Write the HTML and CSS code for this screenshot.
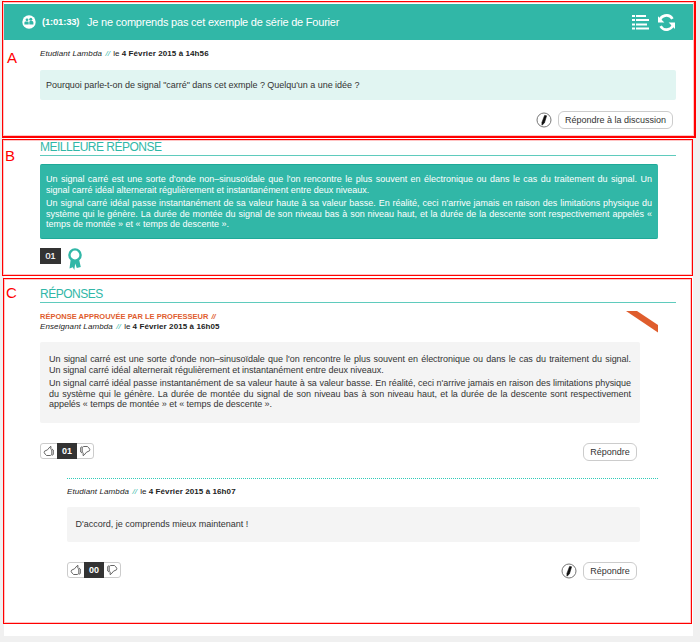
FILE: index.html
```html
<!DOCTYPE html>
<html lang="fr">
<head>
<meta charset="utf-8">
<title>Discussion</title>
<link rel="stylesheet" href="styles.css">
</head>
<body>
<svg class="defs" aria-hidden="true">
  <symbol id="pencil" viewBox="0 0 16 16"><circle cx="8" cy="8" r="7" fill="#fff" stroke="#777" stroke-width="1"/><path d="M8.600 3.400 10.600 3.800 8.400 11 5.900 13.200 6 10.200Z" fill="#111" stroke="#111" stroke-width=".6" stroke-linejoin="round"/></symbol>
  <symbol id="thumb" viewBox="0 0 12 12"><path d="M1.5 6.200 4.500 4.800 7 1.800 8 1.500 7.800 4.200 8.800 5v4.600L7.300 10.500H3.600L2.200 9.200 1.200 7.600Z M9 4l1.300 1v4.500l-1.300 .8" fill="none" stroke="#555" stroke-width=".9"/></symbol>
</svg>
<main class="panel">
  <section class="frame frame-a">
    <span class="tag">A</span>
    <header class="bar">
      <svg class="group" viewBox="0 0 14 14"><circle cx="7" cy="7" r="6.700" fill="#fff"/><g fill="#31b7a7"><circle cx="5" cy="4.800" r="1.400"/><circle cx="8.800" cy="4.300" r="1.500"/><path d="M2.400 9.600V7.700q0-1.100 1.100-1.100h2.200q1 0 1 1.100v1.900ZM7.300 9.600V7q0-1 1-1h1.400q1.700 0 1.700 1.400v2.200Z"/></g></svg>
      <b class="time">(1:01:33)</b>
      <h1 class="title">Je ne comprends pas cet exemple de série de Fourier</h1>
      <svg class="list" viewBox="0 0 17 15"><path d="M0 1h3M4 1h10M0 5h3M4 5h13M0 9.500h3M4 9.500h11M0 13.500h3M4 13.500h13" stroke="#fff" stroke-width="2"/></svg>
      <svg class="sync" viewBox="0 0 16 16"><path d="M1.500 7.500A6.500 6.500 0 0 1 13.600 4.600M14.500 8.500A6.500 6.500 0 0 1 2.400 11.400" fill="none" stroke="#fff" stroke-width="2.500"/><path d="M0 2V8H6ZM16 14V8H10Z" fill="#fff"/></svg>
    </header>
    <p class="meta meta-a"><i>Etudiant Lambda</i> <em>//</em> le <b>4 Février 2015 à 14h56</b></p>
    <div class="question">Pourquoi parle-t-on de signal "carré" dans cet exmple ? Quelqu'un a une idée ?</div>
    <div class="actions actions-a"><svg class="pencil"><use href="#pencil"/></svg><button class="pill wide">Répondre à la discussion</button></div>
  </section>
  <section class="frame frame-b">
    <span class="tag">B</span>
    <h2 class="heading">MEILLEURE RÉPONSE</h2>
    <div class="best">
      <p><span>Un signal carré est une sorte d'onde non–sinusoïdale que l'on rencontre le plus souvent en électronique ou dans le cas du traitement du signal. Un</span><span class="end">signal carré idéal alternerait régulièrement et instantanément entre deux niveaux.</span></p>
      <p><span>Un signal carré idéal passe instantanément de sa valeur haute à sa valeur basse. En réalité, ceci n'arrive jamais en raison des limitations physique du</span><span>système qui le génère. La durée de montée du signal de son niveau bas à son niveau haut, et la durée de la descente sont respectivement appelés «</span><span class="end">temps de montée » et « temps de descente ».</span></p>
    </div>
    <div class="award"><b class="score">01</b><svg class="medal" viewBox="0 0 14 22"><path d="M2.600 12 1.500 20.500 4.800 19.300 6.300 22 7.200 15.500 8.800 20 12.800 19 11.200 12Z" fill="#31b7a7"/><circle cx="7" cy="7" r="5.600" fill="#fff" stroke="#31b7a7" stroke-width="2.400"/></svg></div>
  </section>
  <section class="frame frame-c">
    <span class="tag">C</span>
    <h2 class="heading">RÉPONSES</h2>
    <svg class="ribbon" viewBox="0 0 32 22"><path d="M0 0H11L32 14V21.500Z" fill="#df5d2d"/></svg>
    <p class="approved">RÉPONSE APPROUVÉE PAR LE PROFESSEUR <i>//</i></p>
    <p class="meta meta-c"><i>Enseignant Lambda</i> <em>//</em> le <b>4 Février 2015 à 16h05</b></p>
    <div class="answer">
      <p><span>Un signal carré est une sorte d'onde non–sinusoïdale que l'on rencontre le plus souvent en électronique ou dans le cas du traitement du signal.</span><span class="end">Un signal carré idéal alternerait régulièrement et instantanément entre deux niveaux.</span></p>
      <p><span>Un signal carré idéal passe instantanément de sa valeur haute à sa valeur basse. En réalité, ceci n'arrive jamais en raison des limitations physique</span><span>du système qui le génère. La durée de montée du signal de son niveau bas à son niveau haut, et la durée de la descente sont respectivement</span><span class="end">appelés « temps de montée » et « temps de descente ».</span></p>
    </div>
    <div class="footer footer-1"><div class="vote"><svg class="thumb"><use href="#thumb"/></svg><b>01</b><svg class="thumb down"><use href="#thumb"/></svg></div><div class="actions"><button class="pill">Répondre</button></div></div>
    <article class="reply">
      <p class="meta meta-r"><i>Etudiant Lambda</i> <em>//</em> le <b>4 Février 2015 à 16h07</b></p>
      <div class="comment">D'accord, je comprends mieux maintenant !</div>
      <div class="footer footer-2"><div class="vote"><svg class="thumb"><use href="#thumb"/></svg><b>00</b><svg class="thumb down"><use href="#thumb"/></svg></div><div class="actions"><svg class="pencil"><use href="#pencil"/></svg><button class="pill">Répondre</button></div></div>
    </article>
  </section>
</main>
</body>
</html>
```
FILE: styles.css
```css
* { box-sizing: border-box; }
body { margin: 0; background: #f0f0f0; font: 9px/10.5px "Liberation Sans", Arial, sans-serif; color: #333; height: 642px; overflow: hidden; }
h1, h2, p { margin: 0; font-weight: normal; }
svg { display: block; flex: none; }
.defs { position: absolute; width: 0; height: 0; }
.panel { background: #fff; width: 689px; height: 636px; margin-left: 4px; padding-top: 1px; }
.frame { position: relative; border: 1px solid #f00; padding-left: 37px; box-shadow: inset 0 0 0 1px #ffc4c4; }
.frame-a { width: 694px; height: 137px; margin-left: -2px; border-bottom-width: 2px; border-right-width: 2px; }
.frame-b { width: 691px; height: 137px; margin: 1px 0 0 -2px; }
.frame-c { width: 689px; height: 346px; margin: 2px 0 0 -1px; padding-left: 36px; }
.tag { position: absolute; left: 4px; top: 48px; color: #f00; font-size: 15px; line-height: 16px; }
.frame-b .tag { left: 2px; top: 8px; }
.frame-c .tag { left: 2px; top: 6px; }
.bar { display: flex; align-items: center; background: #31b7a7; color: #fff; height: 36px; margin: 2px 1px 0 -36px; padding: 0 18px; }
.group { width: 14px; height: 14px; }
.time { font-size: 9.5px; width: 45px; margin-left: 6px; white-space: nowrap; letter-spacing: -.2px; }
.title { font-size: 11px; flex: 1; white-space: nowrap; letter-spacing: -.21px; }
.list { width: 17px; height: 15px; }
.sync { width: 17px; height: 17px; margin-left: 9px; }
.meta { font-size: 8px; line-height: 10px; color: #222; white-space: nowrap; }
.meta i { letter-spacing: .1px; }
.meta em { color: #31b7a7; margin: 0 1.2px; }
.meta b { letter-spacing: .09px; }
.meta-a { margin-top: 9px; }
.question { margin-top: 11px; width: 636px; height: 30px; background: #e1f5f2; border-radius: 2px; padding-left: 6px; line-height: 30px; letter-spacing: -.03px; }
.actions { display: flex; align-items: center; gap: 6px; }
.actions-a { justify-content: flex-end; width: 633px; margin-top: 11px; }
.pencil { width: 16px; height: 16px; }
.pill { width: 54px; height: 18px; padding: 0; background: #fff; border: 1px solid #ccc; border-radius: 6px; font: 9px "Liberation Sans", Arial, sans-serif; color: #333; white-space: nowrap; }
.wide { width: 115px; }
.heading { color: #31b7a7; font-size: 12px; line-height: 14px; height: 16px; width: 636px; border-bottom: 1px solid #5fcbbd; white-space: nowrap; letter-spacing: -.5px; }
.best { margin-top: 8px; width: 618px; height: 75px; padding: 9px 6px; background: #31b7a7; border: 1px solid #1ea998; border-width: 1px 0; border-radius: 2px; color: #fff; }
.best p + p, .answer p + p { margin-top: 3px; }
.best span, .answer span { display: block; white-space: nowrap; text-align-last: justify; }
.best .end, .answer .end { text-align-last: left; }
.award { display: flex; margin-top: 9px; gap: 7px; }
.score { width: 21px; height: 16px; background: #333; color: #fff; text-align: center; line-height: 16px; font-weight: normal; -webkit-text-stroke: .2px #fff; }
.medal { width: 14px; height: 22px; }
.frame-c .heading { margin-top: 8px; }
.ribbon { position: absolute; left: 622px; top: 32px; width: 32px; height: 22px; }
.approved { color: #df5d2d; font-size: 7.5px; font-weight: bold; line-height: 10px; margin-top: 9px; }
.approved i { margin-left: 1px; }
.answer { background: #f4f4f4; border-radius: 2px; width: 600px; height: 81px; margin-top: 10px; padding: 12px 9px; letter-spacing: -.03px; }
.footer { display: flex; justify-content: space-between; align-items: flex-start; }
.footer-1 { width: 597px; margin-top: 20px; height: 19px; }
.vote { display: flex; align-items: center; width: 54px; height: 16px; border: 1px solid #ccc; border-radius: 3px; }
.vote b { width: 22px; height: 16px; margin: -1px 0; background: #333; color: #fff; text-align: center; line-height: 16px; font-size: 9px; }
.thumb { width: 12px; height: 12px; margin: 0 2px; }
.down { transform: rotate(180deg); }
.reply { margin: 16px 0 0 27px; width: 591px; border-top: 1px dotted #31cbb9; }
.meta-r { margin-top: 8px; }
.comment { width: 573px; height: 35px; margin-top: 10px; padding-left: 8.5px; background: #f4f4f4; border-radius: 2px; line-height: 35px; }
.footer-2 { width: 570px; margin-top: 20px; }
```
